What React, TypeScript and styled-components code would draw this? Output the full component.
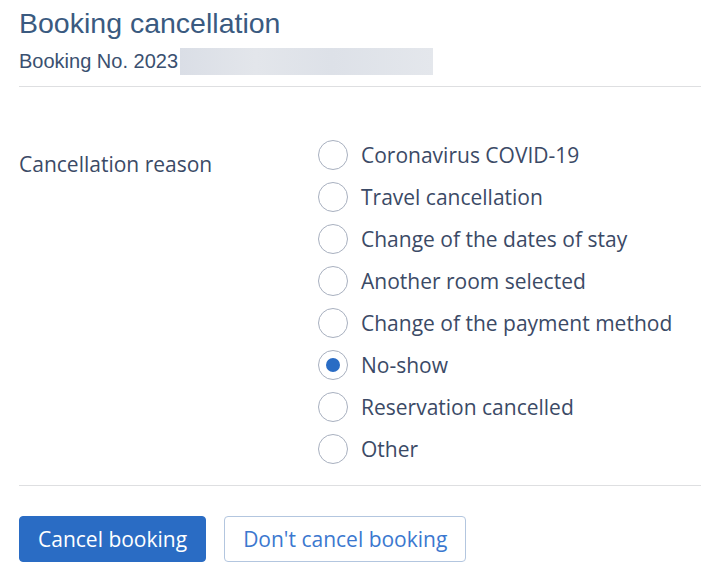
import { FC, useState } from "react";
import styled, { createGlobalStyle } from "styled-components";

const GlobalStyle = createGlobalStyle`
  body {
    margin: 0;
    background: #fff;
    font-family: "Open Sans", "Noto Sans", sans-serif;
    color: #3b4a66;
  }
`;

const reasons = [
  "Coronavirus COVID-19",
  "Travel cancellation",
  "Change of the dates of stay",
  "Another room selected",
  "Change of the payment method",
  "No-show",
  "Reservation cancelled",
  "Other",
];

const App: FC = () => {
  const [selected, setSelected] = useState("No-show");

  return (
    <>
      <GlobalStyle />
      <Page>
        <Header>
          <Title>Booking cancellation</Title>
          <BookingNo>
            Booking No. 2023
            <Blurred />
          </BookingNo>
        </Header>
        <Divider />
        <ReasonSection>
          <Label>Cancellation reason</Label>
          <RadioList>
            {reasons.map((reason) => (
              <RadioRow key={reason} onClick={() => setSelected(reason)}>
                <RadioCircle checked={selected === reason} />
                <RadioText>{reason}</RadioText>
              </RadioRow>
            ))}
          </RadioList>
        </ReasonSection>
        <Divider />
        <Actions>
          <Button variant="primary">Cancel booking</Button>
          <Button variant="secondary">Don't cancel booking</Button>
        </Actions>
      </Page>
    </>
  );
};

export default App;

const Page = styled.div`
  display: flex;
  flex-direction: column;
  padding-left: 19px;
  width: 682px;
`;

const Header = styled.div`
  display: flex;
  flex-direction: column;
  padding-top: 6px;
  padding-bottom: 11px;
`;

const Title = styled.h1`
  margin: 0;
  font-family: "Liberation Sans", Arial, sans-serif;
  font-weight: 400;
  font-size: 28.5px;
  line-height: 34px;
  color: #3a5a80;
`;

const BookingNo = styled.div`
  display: flex;
  align-items: center;
  margin-top: 7px;
  font-family: "Liberation Sans", Arial, sans-serif;
  font-size: 20px;
  line-height: 28px;
  color: #3a5070;
`;

const Blurred = styled.span`
  display: inline-block;
  width: 253px;
  height: 27px;
  margin-left: 2px;
  background: linear-gradient(
    to right,
    #dadee6,
    #e3e6eb 30%,
    #dde1e8 60%,
    #e4e7ec
  );
`;

const Divider = styled.hr`
  margin: 0;
  border: none;
  border-top: 1px solid #dedfe1;
  height: 0;
`;

const ReasonSection = styled.div`
  display: flex;
  padding-top: 53px;
  padding-bottom: 21px;
`;

const Label = styled.div`
  width: 299px;
  padding-top: 10px;
  font-size: 21px;
  line-height: 28px;
  color: #3b4a66;
`;

const RadioList = styled.div`
  display: flex;
  flex-direction: column;
  gap: 12px;
`;

const RadioRow = styled.label`
  display: flex;
  align-items: center;
  gap: 13px;
  cursor: pointer;
  height: 30px;
`;

const RadioCircle = styled.span<{ checked: boolean }>`
  position: relative;
  flex: none;
  width: 30px;
  height: 30px;
  box-sizing: border-box;
  border-radius: 50%;
  border: 1px solid #a8b0bf;
  background: #fff;

  &::after {
    content: "";
    position: absolute;
    top: 7px;
    left: 7px;
    width: 14px;
    height: 14px;
    border-radius: 50%;
    background: #2a6cc4;
    display: ${(props) => (props.checked ? "block" : "none")};
  }
`;

const RadioText = styled.span`
  font-size: 21px;
  line-height: 28px;
  color: #3b4a66;
`;

const Actions = styled.div`
  display: flex;
  gap: 18px;
  padding-top: 30px;
`;

const Button = styled.button<{ variant: "primary" | "secondary" }>`
  height: 46px;
  padding: 0 18px;
  border-radius: 4px;
  font-family: "Open Sans", "Noto Sans", sans-serif;
  font-size: 21px;
  cursor: pointer;
  border: 1px solid
    ${(props) => (props.variant === "primary" ? "#2a6cc4" : "#b3c6df")};
  background: ${(props) => (props.variant === "primary" ? "#2a6cc4" : "#fff")};
  color: ${(props) => (props.variant === "primary" ? "#fff" : "#3b78cf")};
`;
